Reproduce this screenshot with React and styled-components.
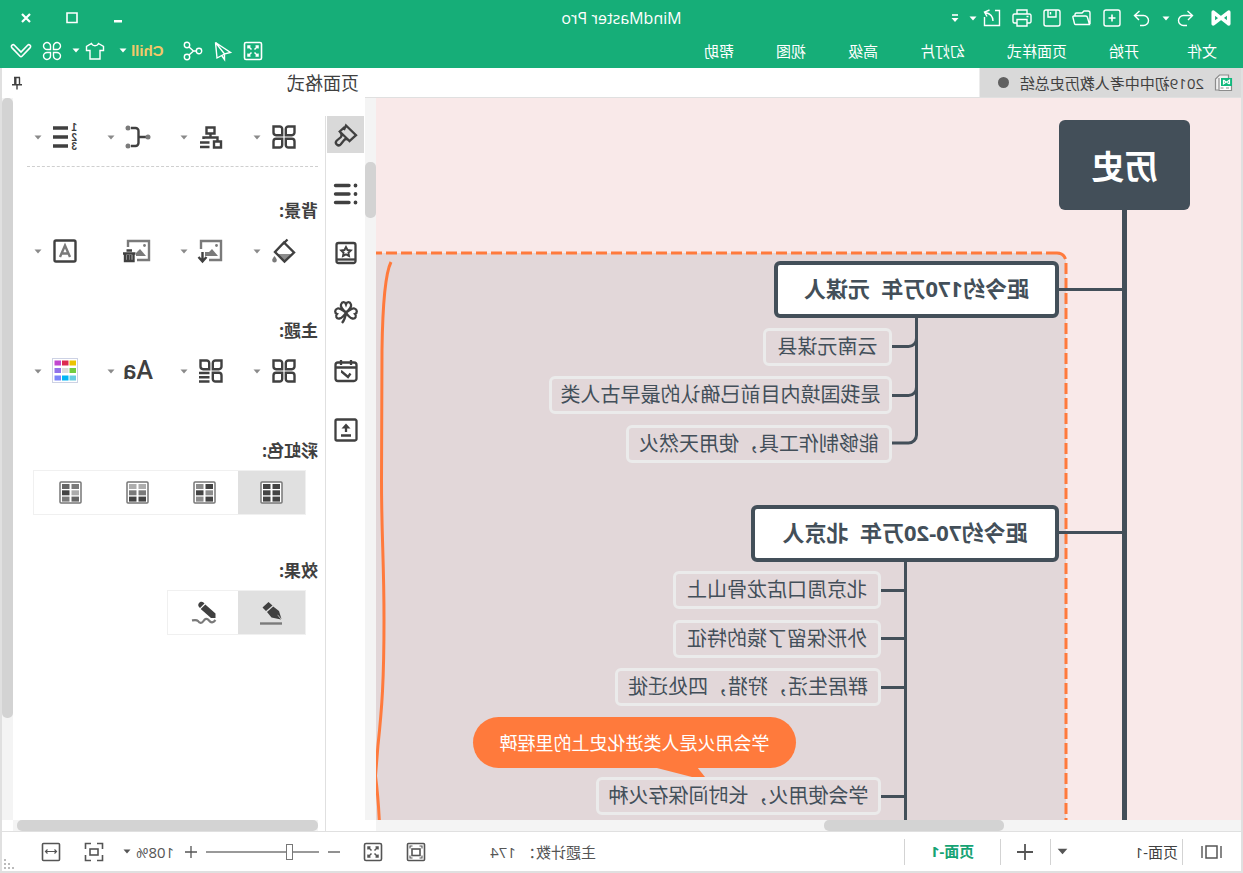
import { useState } from "react";
import styled, { createGlobalStyle, css } from "styled-components";

const GlobalStyle = createGlobalStyle`
  body {
    margin: 0;
    background: #e0e0e0;
  }
  *, *::before, *::after {
    box-sizing: border-box;
  }
  button, input, select {
    font: inherit;
    color: inherit;
    border: 0;
    margin: 0;
    padding: 0;
    background: none;
  }
`;

/* ---------- icons ---------- */

const leafTiles = (
  <>
    <path d="M1.500 1.500H7.500A2.600 2.600 0 0 1 10.200 4.100V10.200H4.100A2.600 2.600 0 0 1 1.500 7.600z" />
    <path d="M22.500 1.500H16.500A2.600 2.600 0 0 0 13.800 4.100V10.200H19.900A2.600 2.600 0 0 0 22.500 7.600z" />
    <path d="M1.500 22.500H7.500A2.600 2.600 0 0 0 10.200 19.900V13.800H4.100A2.600 2.600 0 0 0 1.500 16.400z" />
  </>
);

const icons = {
  logo: (
    <path
      d="M2.500 16.500V3.500L19.500 16.500V3.500L12.500 9M2.500 16.500L9.500 11"
      fill="none"
      stroke="#fff"
      strokeWidth="4"
      strokeLinejoin="round"
      strokeLinecap="round"
    />
  ),
  undo: <path d="M7.500 3L2.500 7.500L7 12M3 7.500H11.500a5 5 0 0 1 0 10H8" />,
  redo: <path d="M12.500 3L17.500 7.500L13 12M17 7.500H8.500a5 5 0 0 0 0 10H12" />,
  create: (
    <>
      <rect x="2" y="2" width="16" height="16" rx="2" />
      <path d="M10 6.500v7M6.500 10h7" strokeWidth="1.600" />
    </>
  ),
  open: (
    <path d="M2 16V5a2 2 0 0 1 2-2h4l2 2h5.500a1.500 1.500 0 0 1 1.500 1.500V8M2.500 16.500h14a1 1 0 0 0 1-0.800L19 9.500a1 1 0 0 0-1-1.500H6.500a2 2 0 0 0-2 1.500L2.500 16.500z" />
  ),
  save: (
    <>
      <rect x="2" y="2" width="16" height="16" rx="2" />
      <path d="M6 2v7h8V2M11.500 4v2.500" />
    </>
  ),
  print: (
    <>
      <path d="M5 6V2h10v4M5 15H2.500A1.500 1.500 0 0 1 1 13.500V7.500A1.500 1.500 0 0 1 2.500 6h15A1.500 1.500 0 0 1 19 7.500v6a1.500 1.500 0 0 1-1.500 1.500H15" />
      <path d="M5 11.500h10V18H5zM3.500 8.500h2" />
    </>
  ),
  exportFile: (
    <path d="M7 2.500H2.500v15h15v-6M9 13c0-4 1.500-7 7.500-8.500M12.500 2l5 2-2.500 4.500M17.500 9v8" />
  ),
  overflow: (
    <>
      <path d="M1 7h6" strokeWidth="1.600" />
      <path d="M0.500 10h7L4 14z" fill="currentColor" stroke="none" />
    </>
  ),
  caret: <path d="M0.500 0.500h7L4 4.500z" fill="currentColor" stroke="none" />,
  minimize: <path d="M2 8h8v2.500H2z" fill="currentColor" stroke="none" />,
  maximize: <path d="M1 1h10v9.500H1z" strokeWidth="1.600" />,
  close: <path d="M2 2l8 8M10 2l-8 8" strokeWidth="2.200" />,
  expand: (
    <>
      <rect x="1.500" y="1.500" width="17" height="17" rx="1.500" strokeWidth="1.600" />
      <path d="M8.500 8.500L5 5M5 7.500V5h2.500M11.500 8.500L15 5M12.500 5H15v2.500M8.500 11.500L5 15M5 12.500V15h2.500M11.500 11.500L15 15M15 12.500V15h-2.500" strokeWidth="1.500" />
    </>
  ),
  send: <path d="M17.500 1.500L2.500 11.500l6 1.500zM17.500 1.500L16 17l-7.500-4M8.500 13v5.500l2.500-3.500" />,
  share: (
    <>
      <circle cx="4" cy="10" r="2.700" />
      <circle cx="16" cy="4" r="2.700" />
      <circle cx="16" cy="16" r="2.700" />
      <path d="M6.500 10h3L14 6M9.500 10L14 14" />
    </>
  ),
  shirt: (
    <path d="M6.500 2.500L1.500 5.500v4H5V18h10V9.500h3.500v-4l-5-3c-1.500 3-5.500 3-7 0z" />
  ),
  flower: (
    <>
      <path d="M8.500 8.500H5.500a3.500 3.500 0 1 1 3-3.500zM11.500 8.500H14.500a3.500 3.500 0 1 0-3-3.500z" />
      <path d="M8.500 11.500H5.500a3.500 3.500 0 1 0 3 3.500zM11.500 11.500H14.500a3.500 3.500 0 1 1-3 3.500z" />
    </>
  ),
  chevron: (
    <path
      d="M2 4.200a1.700 1.700 0 0 1 2.400 0L11 11l6.600-6.800a1.700 1.700 0 0 1 2.400 0a1.700 1.700 0 0 1 0.200 2.400L12.200 15a1.700 1.700 0 0 1-2.400 0L1.800 6.600A1.700 1.700 0 0 1 2 4.200z"
      strokeWidth="1.600"
    />
  ),
  document: (
    <>
      <path d="M4.500 4V1h9l4 4v11h-3" stroke="#8c8c8c" fill="#f0f0f0" />
      <path d="M1.500 4v12.500h12.500V4" stroke="#8c8c8c" fill="#fff" />
      <path d="M9.500 14h3M4 14h3" stroke="#8c8c8c" />
      <path d="M1 4h11v8H1z" fill="#10b97d" stroke="none" />
      <path d="M3.500 10V6L9.500 10V6M3.500 10L6 8.500M9.500 6L7 8" stroke="#fff" />
    </>
  ),
  pin: <path d="M3 1.500h6M3.500 1.500v7M8.200 1.500v7M7.200 1.500v7M1 8.700h10M6 8.700v4.800" strokeWidth="1.400" />,
  brush: (
    <path d="M12 2.500L2 12.200L5 14.800L8.500 18C10.500 15.500 12.500 15.500 13.800 17L17.200 21.300a2.700 2.700 0 0 0 4.200-3.600L17.300 14.300C15.800 12.500 16 11 18.300 8.500L14.300 4.800L13.500 5.700zM8.500 18L18.300 8.500" />
  ),
  list: (
    <>
      <path d="M9 3.500h13.500M9 12h13.500M9 20.500h13.500" strokeWidth="3.400" strokeLinecap="round" />
      <path d="M2.500 3.500h0.010M2.500 12h0.010M2.500 20.500h0.010" strokeWidth="3.800" strokeLinecap="round" />
    </>
  ),
  book: (
    <>
      <rect x="2.500" y="2" width="19" height="20" rx="2" />
      <path d="M3 18.500h18" />
      <path d="M12 6l1.500 3 3.300 0.400-2.400 2.300 0.600 3.300-3-1.600-3 1.600 0.600-3.300-2.400-2.300 3.300-0.400z" strokeWidth="1.900" />
    </>
  ),
  clover: (
    <path d="M12 12.500C9 10 6 7.500 7 4.500C8 1.500 11 1.500 12 4.300C13 1.500 16 1.500 17 4.500C18 7.500 15 10 12 12.500zM12 12.500C9 11 6 7.500 3.500 8.500C0.500 9.500 0.500 13 3 14C1 16 2.500 19 5.500 18.500C8.500 18 10.500 15 12 12.500zM12 12.500C15 11 18 7.500 20.500 8.500C23.500 9.500 23.500 13 21 14C23 16 21.500 19 18.500 18.500C15.500 18 13.500 15 12 12.500zM12 12.500C12.500 17 13.500 20 16 23" />
  ),
  calendar: (
    <>
      <rect x="1.500" y="3.500" width="21" height="18.500" rx="2.500" />
      <path d="M2 8.500h20M7 1v5M17 1v5M17 12.500h-0.500l-6.500 5.500-2.500-3.500" />
    </>
  ),
  upload: (
    <>
      <rect x="1.500" y="1.500" width="21" height="21" rx="1.500" />
      <path d="M12 14V8.500M7 17.500h10" />
      <path d="M12 5.500L7.500 10.500h9z" fill="currentColor" stroke="none" />
    </>
  ),
  leaves: (
    <>
      {leafTiles}
      <path d="M22.500 22.500H16.500A2.600 2.600 0 0 1 13.800 19.900V13.800H19.900A2.600 2.600 0 0 1 22.500 16.400z" />
    </>
  ),
  leavesList: (
    <>
      {leafTiles}
      <path d="M13.500 14H24M13.500 18.200H24M13.500 22.500H24" />
    </>
  ),
  layout: (
    <>
      <path d="M8.500 2.500h8v6h-8zM2 16.500h7v6H2zM12.500 8.500v4M5.500 16v-3.500h14V14" />
      <path d="M13.500 17.500h9.500M13.500 22h9.500" />
    </>
  ),
  branch: (
    <>
      <path d="M3 12h8M19 3h-4.500a3 3 0 0 0-3 3v12a3 3 0 0 0 3 3H19" />
      <circle cx="2" cy="12" r="2.500" fill="#7a7a7a" stroke="none" />
      <circle cx="22" cy="3" r="2.500" fill="#7a7a7a" stroke="none" />
      <circle cx="22" cy="21" r="2.500" fill="#7a7a7a" stroke="none" />
    </>
  ),
  numbering: (
    <>
      <path d="M9 3h15M9 12h15M9 21h15" strokeWidth="3.600" />
      <g fill="currentColor" stroke="none" fontSize="10" fontWeight="700" fontFamily="Liberation Sans, sans-serif">
        <text x="0" y="6">1</text>
        <text x="0" y="15.500">2</text>
        <text x="0" y="25">3</text>
      </g>
    </>
  ),
  fill: (
    <>
      <path d="M5 15h14l-7.500 7z" fill="#8c8c8c" stroke="none" />
      <path d="M8.500 0.500l4.500 4.500M12 3.500L2 13.500l9.500 9L21 13z" />
      <path d="M21.500 17c1.500 2 2.300 3 2.300 4.200a2.300 2.300 0 0 1-4.600 0C19.200 20 20 19 21.500 17z" fill="#7a7a7a" stroke="none" />
    </>
  ),
  imageDown: (
    <>
      <path d="M22 10V2H2v19h12" stroke="#7a7a7a" />
      <path d="M5 17l6-7 3 3 4 0 0 4z" fill="#7a7a7a" stroke="none" />
      <circle cx="6.500" cy="6.500" r="1.400" fill="#7a7a7a" stroke="none" />
      <path d="M20.500 13v9M16.500 18l4 4.500 4-4.500" />
    </>
  ),
  imageDelete: (
    <>
      <path d="M22 8V2H1v19h12" stroke="#7a7a7a" />
      <path d="M4 17l6-7 4 4v3z" fill="#7a7a7a" stroke="none" />
      <circle cx="5.500" cy="6.500" r="1.400" fill="#7a7a7a" stroke="none" />
      <path d="M14.500 14.500H27M18 11.500h5.500M16.500 14.500v7.500h8.500v-7.500M19.500 16v5M22.200 16v5" />
    </>
  ),
  watermark: (
    <>
      <rect x="1.500" y="1.500" width="21" height="21" rx="1.500" />
      <path d="M7 18L12 6.500 17 18M8.800 14.500h6.400" stroke="#7a7a7a" />
    </>
  ),
  pen: (
    <>
      <path d="M1 22.500h22" stroke="#7a7a7a" strokeWidth="2.400" />
      <path d="M14.500 1l6 5.500-3.500 3.500-6.500-5.500zM9.800 5.500l6.200 5.500-4.500 5.500L2 18.500l4-5-1.500 1L1.500 18 4 10z" fill="currentColor" stroke="none" />
    </>
  ),
  pencil: (
    <>
      <path d="M0.500 19c2.500 3 4.500 3 6.500 0.500s4-2 5.500 0.500 4 2.500 5.500 0c1.500-1.500 3.500-1 6-0.500" stroke="#7a7a7a" strokeWidth="2.200" />
      <path d="M12.500 1.500c2.500-2.500 7 1 4.500 4.500l-1 1L11.500 2.500zM10.700 3.500l4.600 4.500L5 17H0.500v-4.500z" fill="currentColor" stroke="none" />
    </>
  ),
  slides: (
    <>
      <rect x="5" y="4" width="11" height="12" strokeWidth="1.500" />
      <path d="M1 4v12M20 4v12" />
    </>
  ),
  fitPage: (
    <>
      <rect x="1.500" y="1.500" width="17" height="17" rx="1" />
      <rect x="6" y="7" width="8" height="6.500" />
      <path d="M4 6.500V4h2.500M13.500 4H16v2.500M16 13.500V16h-2.500M6.500 16H4v-2.500" strokeWidth="1.100" />
    </>
  ),
  fitSelection: (
    <>
      <path d="M1.500 7V1.500H7M13 1.500h5.500V7M18.500 13v5.500H13M7 18.500H1.500V13" />
      <rect x="6" y="7" width="8" height="6" />
    </>
  ),
  fitWidth: (
    <>
      <rect x="1.500" y="1.500" width="17" height="17" rx="1" />
      <path d="M4.500 9.500h11M6.500 7.500l-2 2 2 2M13.500 7.500l2 2-2 2" strokeWidth="1.200" />
    </>
  ),
  plus: <path d="M6 0v12M0 6h12" />,
  bigPlus: <path d="M8 0v16M0 8h16" strokeWidth="1.800" />,
  minus: <path d="M0 6h12" />,
};

const Drawing = styled.svg.attrs({ "aria-hidden": true })`
  display: block;
  flex: none;
  overflow: visible;
  fill: none;
  stroke: currentColor;
`;

function Icon({ name, w = 24, h = w, stroke = 2, box }) {
  return (
    <Drawing
      width={w}
      height={h}
      viewBox={box || `0 0 ${w} ${h}`}
      strokeWidth={stroke}
    >
      {icons[name]}
    </Drawing>
  );
}

const Caret = () => <Icon name="caret" w={8} h={5} />;

const swatches = [
  "#ebc300", "#dc2a50", "#c247cf",
  "#72cc3f", "#dcdcdc", "#9373ea",
  "#68cde0", "#00b5f5", "#7c85fa",
];

function PaletteIcon() {
  return (
    <Palette width="26" height="26" viewBox="0 0 26 26">
      <rect x="0.500" y="0.500" width="25" height="24" fill="#fff" stroke="#cdd2e4" />
      {swatches.map((color, i) => (
        <rect
          key={color}
          x={2 + (i % 3) * 7.5}
          y={2.5 + Math.floor(i / 3) * 7.5}
          width="6.500"
          height="5"
          fill={color}
          stroke="none"
        />
      ))}
    </Palette>
  );
}

const Palette = styled(Drawing)`
  margin: 0 -1px;
`;

function RainbowIcon({ cells }) {
  return (
    <Drawing width="23" height="23" viewBox="0 0 23 23">
      <rect x="1" y="1" width="21" height="21" rx="1" fill="#fff" stroke="#777" strokeWidth="1.500" />
      {cells.map((color, i) => (
        <rect
          key={i}
          x={i % 2 ? 12.5 : 3}
          y={3 + Math.floor(i / 2) * 6.3}
          width="7.500"
          height="5"
          fill={color}
          stroke="none"
        />
      ))}
    </Drawing>
  );
}

/* ---------- window ---------- */

const Window = styled.div`
  min-height: 100vh;
  display: flex;
  flex-direction: column;
  transform: scaleX(-1);
  font-family: "Open Sans", "Noto Sans CJK SC", sans-serif;
  font-size: 15px;
  line-height: 20px;
  color: #404040;
  background: #fff;
`;

const Header = styled.header`
  background: #16ae78;
  color: #fff;
`;

const TitleBar = styled.div`
  height: 36px;
  display: grid;
  grid-template-columns: 1fr auto 1fr;
  align-items: center;
`;

const Title = styled.h1`
  margin: 0;
  font-size: 16px;
  font-weight: 400;
`;

const QuickTools = styled.div`
  display: flex;
  align-items: center;
  gap: 10px;
  padding-left: 12px;
`;

const Logo = styled.span`
  margin-right: 6px;
`;

const PlainButton = styled.button`
  display: flex;
  align-items: center;
  gap: 5px;
`;

const WindowControls = styled.div`
  display: flex;
  justify-content: flex-end;
  padding-right: 3px;
`;

const ControlButton = styled.button`
  width: 46px;
  height: 32px;
  display: grid;
  place-items: center;
`;

const MenuBar = styled.div`
  height: 32px;
  display: flex;
  align-items: center;
  justify-content: space-between;
  padding-bottom: 3px;
`;

const Menu = styled.nav`
  display: flex;
  padding-left: 26px;
  gap: 42px;

  a {
    color: inherit;
    text-decoration: none;
  }
  a:first-child {
    margin-right: 6px;
  }
`;

const MenuTools = styled.div`
  display: flex;
  align-items: center;
  gap: 10px;
  padding-right: 10px;
`;

const Chill = styled(PlainButton)`
  margin: 0 4px 0 10px;
  gap: 4px;

  b {
    color: #f3c869;
    font-family: "Liberation Sans", sans-serif;
  }
`;

const Body = styled.div`
  flex: 1;
  display: flex;
  border: solid #e0e0e0;
  border-width: 0 2px 2px;
  flex-direction: column;
`;

const Work = styled.div`
  flex: 1;
  display: flex;
`;

/* ---------- editor ---------- */

const Editor = styled.main`
  flex: 1;
  min-width: 0;
  display: flex;
  flex-direction: column;
`;

const Tabs = styled.div`
  height: 30px;
  border-bottom: 1px solid #e0e0e0;
  display: flex;
`;

const Tab = styled.button`
  width: 262px;
  display: flex;
  align-items: center;
  gap: 11px;
  padding-left: 8px;
  background: #d9d9d9;
  border-right: 1px solid #ececec;
  white-space: nowrap;
`;

const Dirty = styled.span`
  width: 11px;
  height: 11px;
  border-radius: 50%;
  background: #606060;
`;

const CanvasRow = styled.div`
  flex: 1;
  display: flex;
`;

const Canvas = styled.div`
  flex: 1;
  position: relative;
  overflow: hidden;
  background: #f9e9e9;
  color: #434f59;
`;

const Links = styled.svg`
  position: absolute;
  inset: 0;
  width: 100%;
  height: 100%;
  fill: none;
  stroke: #434f59;
  stroke-width: 3;
`;

const nodeKinds = {
  root: css`
    height: 90px;
    padding-top: 3px;
    border-radius: 6px;
    background: #434f59;
    color: #fff;
    font-size: 33px;
    font-weight: 700;
  `,
  topic: css`
    height: 57px;
    padding-bottom: 4px;
    border: 4px solid #434f59;
    border-radius: 6px;
    background: #fff;
    font-size: 22px;
    font-weight: 700;
  `,
  leaf: css`
    height: 38px;
    border: 3px solid #ebebeb;
    border-radius: 6px;
    font-size: 20px;
  `,
  callout: css`
    height: 51px;
    border-radius: 26px;
    background: #ff7a3c;
    color: #fff;
    font-size: 18px;
  `,
};

const Node = styled.div`
  position: absolute;
  left: ${(p) => p.$x}px;
  top: ${(p) => p.$y}px;
  width: ${(p) => p.$w}px;
  display: flex;
  align-items: center;
  justify-content: center;
  white-space: pre;
  ${(p) => nodeKinds[p.$kind]}
`;

const nodes = [
  { kind: "root", x: 51, y: 22, w: 131, text: "历史" },
  { kind: "topic", x: 182, y: 163, w: 285, text: "距今约170万年  元谋人" },
  { kind: "leaf", x: 349, y: 230, w: 129, text: "云南元谋县" },
  { kind: "leaf", x: 349, y: 278, w: 343, text: "是我国境内目前已确认的最早古人类" },
  { kind: "leaf", x: 349, y: 327, w: 266, text: "能够制作工具，使用天然火" },
  { kind: "topic", x: 182, y: 407, w: 308, text: "距今约70-20万年  北京人" },
  { kind: "leaf", x: 360, y: 473, w: 208, text: "北京周口店龙骨山上" },
  { kind: "leaf", x: 360, y: 522, w: 208, text: "外形保留了猿的特征" },
  { kind: "leaf", x: 360, y: 570, w: 266, text: "群居生活，狩猎，四处迁徙" },
  { kind: "callout", x: 445, y: 619, w: 323, text: "学会用火是人类进化史上的里程碑" },
  { kind: "leaf", x: 360, y: 679, w: 285, text: "学会使用火，长时间保存火种" },
];

const VScroll = styled.div`
  width: 11px;
  padding-top: ${(p) => p.$offset}px;
  background: #f4f4f4;

  &::before {
    content: "";
    display: block;
    height: ${(p) => p.$size}px;
    border-radius: 5px;
    background: #d3d3d3;
  }
`;

const HScroll = styled.div`
  height: 11px;
  margin: 0 11px 0 ${(p) => p.$inset || 0}px;
  padding-left: ${(p) => p.$offset}px;
  background: #f4f4f4;

  &::before {
    content: "";
    display: block;
    width: ${(p) => p.$size}px;
    height: 11px;
    border-radius: 5px;
    background: #d3d3d3;
  }
`;

/* ---------- side panel ---------- */

const Panel = styled.aside`
  width: 363px;
  display: flex;
  flex-direction: column;
`;

const PanelHeader = styled.div`
  height: 30px;
  display: flex;
  align-items: center;
  justify-content: space-between;
  padding: 0 9px 0 6px;

  h2 {
    margin: 0;
    font-size: 18px;
    font-weight: 400;
  }
`;

const PanelBody = styled.div`
  flex: 1;
  display: flex;
`;

const Strip = styled.div`
  flex: none;
  width: 40px;
  margin-top: 18px;
  padding-left: 1px;
  border-right: 1px solid #e0e0e0;
  display: flex;
  flex-direction: column;
  gap: 22px;
`;

const StripButton = styled.button`
  width: 37px;
  height: 37px;
  display: flex;
  align-items: center;
  padding-left: 6px;
  background: ${(p) => (p.$active ? "#d9d9d9" : "none")};
`;

const PanelMain = styled.div`
  flex: 1;
  display: flex;
  flex-direction: column;
`;

const PanelScroll = styled.div`
  flex: 1;
  display: flex;
`;

const Format = styled.div`
  flex: 1;
  padding: 23px 13px 0 7px;
`;

const ToolRow = styled.div`
  display: grid;
  grid-template-columns: repeat(4, 73px);
`;

const Tool = styled.button`
  height: 32px;
  padding-left: 22px;
  display: flex;
  align-items: center;
  gap: 11px;

  & > svg:last-child:not(:first-child) {
    color: #8a8a8a;
  }
`;

const FontSample = styled.span`
  width: 30px;
  margin: 0 -3px;
  font-size: 25px;
  font-weight: 500;
  font-family: Roboto, sans-serif;
  line-height: 24px;
  text-align: center;
`;

const Divider = styled.hr`
  width: 291px;
  margin: 13px 0 32px;
  border: 0;
  border-top: 1px dashed #cfcfcf;
`;

const Section = styled.section`
  min-height: 120px;

  h3 {
    margin: 0 0 ${(p) => (p.$tight ? 7 : 12)}px;
    font-size: 17px;
    line-height: 24px;
    font-weight: 700;
  }
`;

const Segments = styled.div`
  width: max-content;
  margin-left: 12px;
  padding-right: 3px;
  display: flex;
  border: 1px solid #f0f0f0;
`;

const Segment = styled.button`
  width: 67px;
  height: 43px;
  display: grid;
  place-items: center;
  background: ${(p) => (p.$active ? "#e0e0e0" : "none")};
`;

/* ---------- status bar ---------- */

const StatusBar = styled.footer`
  height: 40px;
  border-top: 1px solid #e0e0e0;
  display: flex;
  align-items: center;
  color: #555;
`;

const Cell = styled.div`
  width: ${(p) => p.$w}px;
  height: 26px;
  border-right: 1px solid #d3d3d3;
  display: grid;
  place-items: center;
`;

const PageSelect = styled.label`
  width: 132px;
  height: 26px;
  padding: 0 6px 0 4px;
  border-right: 1px solid #d3d3d3;
  display: flex;
  align-items: center;

  select {
    flex: 1;
    appearance: none;
    color: #404040;
    outline: none;
  }
`;

const PageTab = styled.button`
  padding-bottom: 2px;
  color: #16a374;
  font-weight: 700;
`;

const Count = styled.div`
  margin-left: auto;
  margin-right: 64px;
  display: flex;
  gap: 5px;
`;

const ViewTools = styled.div`
  display: flex;
  align-items: center;
  gap: 23px;
  padding-right: 27px;
`;

const Zoom = styled.div`
  display: flex;
  align-items: center;
  gap: 9px;
`;

const Range = styled.input`
  width: 113px;
  height: 16px;
  appearance: none;

  &::-webkit-slider-runnable-track {
    height: 2px;
    background: #999;
  }
  &::-webkit-slider-thumb {
    appearance: none;
    width: 7px;
    height: 16px;
    margin-top: -7px;
    border: 1px solid #777;
    background: #fff;
  }
`;

const ZoomValue = styled(PlainButton)`
  margin: 0 -4px 0 -12px;
`;

const Grip = styled.span`
  align-self: flex-end;
  padding: 0 2px 2px 0;
  color: #bbb;
`;

const menuItems = ["文件", "开始", "页面样式", "幻灯片", "高级", "视图", "帮助"];

const stripItems = [
  ["brush", "页面格式"],
  ["list", "大纲"],
  ["book", "图标"],
  ["clover", "剪贴画"],
  ["calendar", "任务"],
  ["upload", "导出"],
];

const rainbows = [
  ["#444", "#444", "#444", "#444", "#444", "#444"],
  ["#444", "#8c8c8c", "#8c8c8c", "#444", "#444", "#8c8c8c"],
  ["#adadad", "#adadad", "#7a7a7a", "#7a7a7a", "#444", "#444"],
  ["#7a7a7a", "#666", "#adadad", "#444", "#666", "#7a7a7a"],
];

function MindMap() {
  return (
    <Canvas>
      <Links>
        <rect x="175" y="155" width="1600" height="1600" rx="9" fill="#e2d7d9" stroke="none" />
        <path d="M184 155H3000" stroke="#ff7a3c" strokeDasharray="11 4" />
        <path d="M184 155a9 9 0 0 0-9 9V3000" stroke="#ff7a3c" strokeDasharray="11 4" />
        <path d="M116.500 110V3000" strokeWidth="5" />
        <path d="M116 191.500H184M116 434.500H184" />
        <path d="M324.500 218V337a8 8 0 0 0 8 8H350M324.500 240a8 8 0 0 0 8 8.500H350M324.500 289a8 8 0 0 0 8 8.500H350" />
        <path d="M335.500 462V3000M335 492.500H361M335 540.500H361M335 589.500H361M335 698.500H361" />
        <path d="M850 164Q858 180 859 252L859.500 382C859.500 440 857 460 857 522C857 582 859 610 863 647L865.500 678Q862 705 861 740" stroke="#ff7a3c" />
        <path d="M588 669H544L536 679H549z" fill="#ff7a3c" stroke="none" />
      </Links>
      {nodes.map((node) => (
        <Node
          key={node.text}
          $kind={node.kind}
          $x={node.x}
          $y={node.y}
          $w={node.w}
        >
          {node.text}
        </Node>
      ))}
    </Canvas>
  );
}

function ToolButton({ label, icon, caret = true, children }) {
  return (
    <Tool aria-label={label}>
      {children || <Icon name={icon} stroke={2.4} />}
      {caret && <Caret />}
    </Tool>
  );
}

function App() {
  const [panel, setPanel] = useState("brush");
  const [rainbow, setRainbow] = useState(0);
  const [effect, setEffect] = useState("pen");
  const [zoom, setZoom] = useState(108);

  return (
    <>
      <GlobalStyle />
      <Window lang="zh-CN">
        <Header>
          <TitleBar>
            <QuickTools>
              <Logo>
                <Icon name="logo" w={20} box="0 0 22 20" />
              </Logo>
              <PlainButton aria-label="撤销">
                <Icon name="undo" w={20} stroke={1.4} />
                <Caret />
              </PlainButton>
              <PlainButton aria-label="重做">
                <Icon name="redo" w={20} stroke={1.4} />
              </PlainButton>
              <PlainButton aria-label="新建">
                <Icon name="create" w={20} stroke={1.4} />
              </PlainButton>
              <PlainButton aria-label="打开">
                <Icon name="open" w={20} stroke={1.4} />
              </PlainButton>
              <PlainButton aria-label="保存">
                <Icon name="save" w={20} stroke={1.4} />
              </PlainButton>
              <PlainButton aria-label="打印">
                <Icon name="print" w={20} stroke={1.4} />
              </PlainButton>
              <PlainButton aria-label="导出">
                <Icon name="exportFile" w={20} stroke={1.4} />
                <Caret />
              </PlainButton>
              <PlainButton aria-label="更多">
                <Icon name="overflow" w={8} h={20} />
              </PlainButton>
            </QuickTools>
            <Title>MindMaster Pro</Title>
            <WindowControls>
              <ControlButton aria-label="最小化">
                <Icon name="minimize" w={12} />
              </ControlButton>
              <ControlButton aria-label="最大化">
                <Icon name="maximize" w={12} />
              </ControlButton>
              <ControlButton aria-label="关闭">
                <Icon name="close" w={12} />
              </ControlButton>
            </WindowControls>
          </TitleBar>
          <MenuBar>
            <Menu>
              {menuItems.map((item) => (
                <a href="#" key={item}>
                  {item}
                </a>
              ))}
            </Menu>
            <MenuTools>
              <PlainButton aria-label="全屏">
                <Icon name="expand" w={20} />
              </PlainButton>
              <PlainButton aria-label="发送">
                <Icon name="send" w={20} stroke={1.4} />
              </PlainButton>
              <PlainButton aria-label="分享">
                <Icon name="share" w={20} stroke={1.4} />
              </PlainButton>
              <Chill>
                <b>Chill</b>
                <Caret />
              </Chill>
              <PlainButton aria-label="皮肤">
                <Icon name="shirt" w={20} stroke={1.4} />
                <Caret />
              </PlainButton>
              <PlainButton aria-label="应用">
                <Icon name="flower" w={20} stroke={1.4} />
              </PlainButton>
              <PlainButton aria-label="收起">
                <Icon name="chevron" w={22} h={20} />
              </PlainButton>
            </MenuTools>
          </MenuBar>
        </Header>

        <Body>
          <Work>
            <Editor>
              <Tabs>
                <Tab>
                  <Icon name="document" w={18} stroke={1.2} />
                  2019初中中考人教历史总结
                  <Dirty />
                </Tab>
              </Tabs>
              <CanvasRow>
                <MindMap />
                <VScroll $offset={64} $size={56} />
              </CanvasRow>
              <HScroll $offset={237} $size={180} />
            </Editor>

            <Panel>
              <PanelHeader>
                <h2>页面格式</h2>
                <PlainButton aria-label="固定">
                  <Icon name="pin" w={12} h={14} />
                </PlainButton>
              </PanelHeader>
              <PanelBody>
                <Strip>
                  {stripItems.map(([icon, label]) => (
                    <StripButton
                      key={icon}
                      aria-label={label}
                      $active={panel === icon}
                      onClick={() => setPanel(icon)}
                    >
                      <Icon name={icon} stroke={2.3} />
                    </StripButton>
                  ))}
                </Strip>
                <PanelMain>
                  <PanelScroll>
                    <Format>
                      <ToolRow>
                        <ToolButton label="布局" icon="leaves" />
                        <ToolButton label="结构" icon="layout" />
                        <ToolButton label="连接线" icon="branch" />
                        <ToolButton label="编号" icon="numbering" />
                      </ToolRow>
                      <Divider />
                      <Section>
                        <h3>背景:</h3>
                        <ToolRow>
                          <ToolButton label="背景颜色" icon="fill" />
                          <ToolButton label="背景图片" icon="imageDown" />
                          <ToolButton
                            label="移除图片"
                            icon="imageDelete"
                            caret={false}
                          />
                          <ToolButton label="水印" icon="watermark" />
                        </ToolRow>
                      </Section>
                      <Section>
                        <h3>主题:</h3>
                        <ToolRow>
                          <ToolButton label="主题样式" icon="leaves" />
                          <ToolButton label="主题列表" icon="leavesList" />
                          <ToolButton label="主题字体">
                            <FontSample>Aa</FontSample>
                          </ToolButton>
                          <ToolButton label="主题颜色">
                            <PaletteIcon />
                          </ToolButton>
                        </ToolRow>
                      </Section>
                      <Section $tight>
                        <h3>彩虹色:</h3>
                        <Segments>
                          {rainbows.map((cells, i) => (
                            <Segment
                              key={i}
                              aria-label={`彩虹色 ${i + 1}`}
                              $active={rainbow === i}
                              onClick={() => setRainbow(i)}
                            >
                              <RainbowIcon cells={cells} />
                            </Segment>
                          ))}
                        </Segments>
                      </Section>
                      <Section $tight>
                        <h3>效果:</h3>
                        <Segments>
                          {["pen", "pencil"].map((name) => (
                            <Segment
                              key={name}
                              aria-label={name === "pen" ? "标准" : "手绘"}
                              $active={effect === name}
                              onClick={() => setEffect(name)}
                            >
                              <Icon name={name} />
                            </Segment>
                          ))}
                        </Segments>
                      </Section>
                    </Format>
                    <VScroll $offset={0} $size={620} />
                  </PanelScroll>
                  <HScroll $inset={7} $offset={0} $size={301} />
                </PanelMain>
              </PanelBody>
            </Panel>
          </Work>

          <StatusBar>
            <Cell $w={59}>
              <PlainButton aria-label="页面视图">
                <Icon name="slides" w={21} h={20} stroke={1.4} />
              </PlainButton>
            </Cell>
            <PageSelect>
              <select aria-label="页面">
                <option>页面-1</option>
              </select>
              <Icon name="caret" w={11} h={7} box="0 0 8 5" />
            </PageSelect>
            <Cell $w={50}>
              <PlainButton aria-label="新建页面">
                <Icon name="bigPlus" w={16} />
              </PlainButton>
            </Cell>
            <Cell $w={96}>
              <PageTab>页面-1</PageTab>
            </Cell>
            <Count>
              <span>主题计数：</span>
              <span>174</span>
            </Count>
            <ViewTools>
              <PlainButton aria-label="整页">
                <Icon name="fitPage" w={20} stroke={1.6} />
              </PlainButton>
              <PlainButton aria-label="全屏">
                <Icon name="expand" w={20} />
              </PlainButton>
              <Zoom>
                <PlainButton aria-label="缩小">
                  <Icon name="minus" w={12} stroke={1.3} />
                </PlainButton>
                <Range
                  type="range"
                  aria-label="缩放"
                  min="10"
                  max="400"
                  value={zoom}
                  onChange={(e) => setZoom(Number(e.target.value))}
                />
                <PlainButton aria-label="放大">
                  <Icon name="plus" w={12} stroke={1.3} />
                </PlainButton>
              </Zoom>
              <ZoomValue>
                {zoom}%
                <Caret />
              </ZoomValue>
              <PlainButton aria-label="适应选区">
                <Icon name="fitSelection" w={20} stroke={1.6} />
              </PlainButton>
              <PlainButton aria-label="适应宽度">
                <Icon name="fitWidth" w={20} stroke={1.6} />
              </PlainButton>
            </ViewTools>
            <Grip>
              <Drawing width="10" height="10" viewBox="0 0 10 10">
                <path
                  d="M8 0h2v2H8zM8 4h2v2H8zM4 4h2v2H4zM8 8h2v2H8zM4 8h2v2H4zM0 8h2v2H0z"
                  fill="currentColor"
                  stroke="none"
                />
              </Drawing>
            </Grip>
          </StatusBar>
        </Body>
      </Window>
    </>
  );
}

export default App;
